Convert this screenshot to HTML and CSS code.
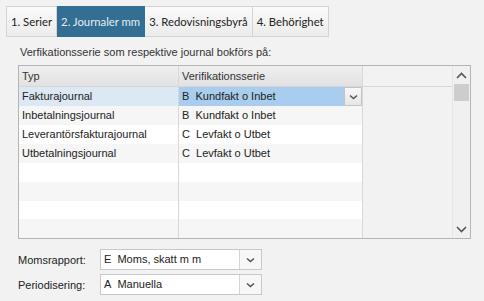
FILE: index.html
```html
<!DOCTYPE html>
<html>

<head>
  <title>Journaler</title>
  <link rel="stylesheet" href="styles.css">
</head>

<body>
  <nav class="tabs">
    <button class="tab">1. Serier</button>
    <button class="tab active">2. Journaler mm</button>
    <button class="tab">3. Redovisningsbyrå</button>
    <button class="tab">4. Behörighet</button>
  </nav>

  <section class="panel">
    <p class="caption">Verfikationsserie som respektive journal bokförs på:</p>

    <div class="grid">
      <div class="grid-main">
        <div class="row head">
          <div class="cell typ">Typ</div>
          <div class="cell ser">Verifikationsserie</div>
          <div class="cell rest"></div>
        </div>
        <div class="row sel">
          <div class="cell typ">Fakturajournal</div>
          <div class="cell ser">B&nbsp; Kundfakt o Inbet
            <span class="drop"><svg width="9" height="6" viewBox="0 0 9 6"><path d="M1 1.5 L4.5 4.5 L8 1.5" fill="none" stroke="#555" stroke-width="1.6"/></svg></span>
          </div>
          <div class="cell rest"></div>
        </div>
        <div class="row">
          <div class="cell typ">Inbetalningsjournal</div>
          <div class="cell ser">B&nbsp; Kundfakt o Inbet</div>
          <div class="cell rest"></div>
        </div>
        <div class="row">
          <div class="cell typ">Leverantörsfakturajournal</div>
          <div class="cell ser">C&nbsp; Levfakt o Utbet</div>
          <div class="cell rest"></div>
        </div>
        <div class="row">
          <div class="cell typ">Utbetalningsjournal</div>
          <div class="cell ser">C&nbsp; Levfakt o Utbet</div>
          <div class="cell rest"></div>
        </div>
        <div class="row"><div class="cell typ"></div><div class="cell ser"></div><div class="cell rest"></div></div>
        <div class="row"><div class="cell typ"></div><div class="cell ser"></div><div class="cell rest"></div></div>
        <div class="row"><div class="cell typ"></div><div class="cell ser"></div><div class="cell rest"></div></div>
        <div class="row"><div class="cell typ"></div><div class="cell ser"></div><div class="cell rest"></div></div>
      </div>
      <div class="scrollbar">
        <svg class="arrow" width="11" height="7" viewBox="0 0 11 7"><path d="M1 6 L5.5 1.5 L10 6" fill="none" stroke="#555" stroke-width="1.6"/></svg>
        <div class="thumb"></div>
        <div class="track"></div>
        <svg class="arrow" width="11" height="7" viewBox="0 0 11 7"><path d="M1 1 L5.5 5.5 L10 1" fill="none" stroke="#555" stroke-width="1.6"/></svg>
      </div>
    </div>

    <div class="fields">
      <label class="field-label">Momsrapport:</label>
      <div class="combo">
        <span class="combo-text">E&nbsp; Moms, skatt m m</span>
        <span class="combo-btn"><svg width="9" height="6" viewBox="0 0 9 6"><path d="M1 1.5 L4.5 4.5 L8 1.5" fill="none" stroke="#555" stroke-width="1.6"/></svg></span>
      </div>
      <label class="field-label">Periodisering:</label>
      <div class="combo">
        <span class="combo-text">A&nbsp; Manuella</span>
        <span class="combo-btn"><svg width="9" height="6" viewBox="0 0 9 6"><path d="M1 1.5 L4.5 4.5 L8 1.5" fill="none" stroke="#555" stroke-width="1.6"/></svg></span>
      </div>
    </div>
  </section>
</body>

</html>
```

FILE: styles.css
```css
body {
  background-color: #f2f2f2;
  font-family: 'Liberation Sans', Arial, sans-serif;
  font-size: 11px;
  color: #222;
  margin: 0;
  padding: 0;
}

.tabs {
  display: flex;
  padding: 6px 0 0 6px;
  height: 31px;
}

.tab {
  font-family: Lato, sans-serif;
  font-size: 11.3px;
  color: #222;
  background: linear-gradient(#fafafa, #ececec);
  border: 1px solid #d4d4d4;
  border-left: none;
  padding: 0 4px;
  margin: 0;
  height: 31px;
  cursor: pointer;
}

.tab:first-child {
  border-left: 1px solid #d4d4d4;
}

.tab.active {
  background: #336f93;
  border-color: #336f93;
  color: #e6eef3;
}

.panel {
  padding: 0 13px 0 18px;
}

.caption {
  margin: 8px 0 0 2px;
  height: 14px;
  line-height: 14px;
  color: #333;
}

.grid {
  display: flex;
  margin-top: 6px;
  width: 451px;
  height: 172px;
  border: 1px solid #b4b4b4;
  background-color: #f2f2f2;
}

.grid-main {
  flex: 1;
  display: flex;
  flex-direction: column;
}

.row {
  display: flex;
  height: 19px;
  background-color: #fff;
}

.row:nth-child(odd) {
  background-color: #f6f6f6;
}

.row.head {
  height: 20px;
  background: linear-gradient(#efefef, #e2e2e2);
  border-bottom: 1px solid #d6d6d6;
}

.cell {
  line-height: 19px;
  padding-left: 3px;
  position: relative;
}

.typ {
  width: 156px;
  border-right: 1px solid #d8d8d8;
}

.ser {
  width: 180px;
  border-right: 1px solid #d8d8d8;
}

.rest {
  flex: 1;
  background-color: #f2f2f2;
  padding: 0;
}

.head .rest {
  background: #f2f2f2;
}

.head .typ,
.head .ser {
  line-height: 20px;
  color: #333;
}

.row.sel .typ {
  background-color: #dce8f3;
}

.row.sel .ser {
  background-color: #a9cdee;
}

.drop {
  position: absolute;
  right: 0;
  top: 0;
  width: 16px;
  height: 17px;
  border: 1px solid #c4c4c4;
  background: linear-gradient(#f8f8f8, #e6e6e6);
  display: flex;
  align-items: center;
  justify-content: center;
}

.scrollbar {
  width: 17px;
  display: flex;
  flex-direction: column;
  align-items: center;
  background-color: #f0f0f0;
  border-left: 1px solid #e6e6e6;
}

.arrow {
  margin: 6px 0 5px;
}

.thumb {
  width: 15px;
  height: 17px;
  background-color: #cdcdcd;
}

.track {
  flex: 1;
}

.fields {
  display: grid;
  grid-template-columns: 82px 162px;
  row-gap: 4px;
  margin-top: 10px;
  align-items: center;
}

.field-label {
  color: #222;
}

.combo {
  display: flex;
  height: 19px;
  border: 1px solid #c8c8c8;
  background-color: #fff;
}

.combo-text {
  flex: 1;
  line-height: 19px;
  padding-left: 3px;
}

.combo-btn {
  width: 21px;
  border-left: 1px solid #d4d4d4;
  background-color: #f7f7f7;
  display: flex;
  align-items: center;
  justify-content: center;
}
```
